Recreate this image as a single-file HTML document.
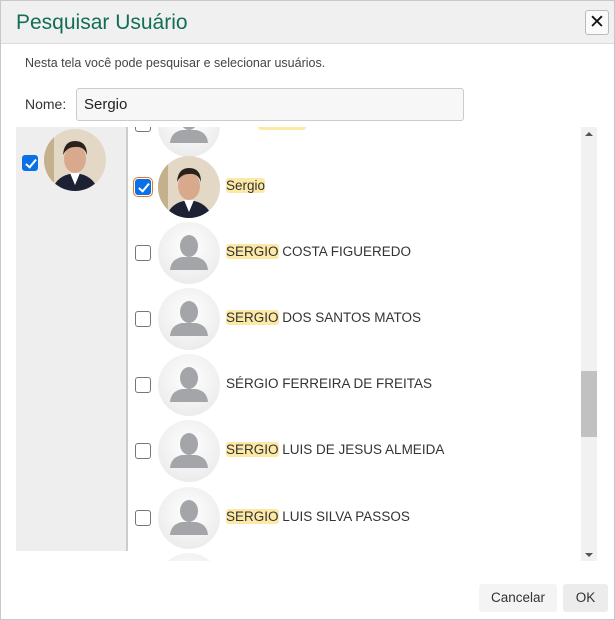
<!DOCTYPE html>
<html><head><meta charset="utf-8"><style>
*{box-sizing:border-box;margin:0;padding:0}
body{width:615px;height:620px;background:#fff;font-family:"Liberation Sans","DejaVu Sans",sans-serif;position:relative;overflow:hidden}
.frame{position:absolute;left:0;top:0;width:615px;height:620px;border:1px solid #c8c8c8}
.hdr{position:absolute;left:1px;top:1px;width:613px;height:43px;background:#f0f0f0;border-bottom:1px solid #ddd}
.title{position:absolute;left:15px;top:10px;font-size:21px;color:#136e57}
.close{position:absolute;left:584px;top:9px;width:24px;height:25px;border:1px solid #bbb;border-radius:3px;background:#fafafa;font-size:19px;font-weight:bold;text-align:center;line-height:23px;color:#111}
.desc{position:absolute;left:25px;top:56px;font-size:12.5px;color:#444}
.lbl{position:absolute;left:25px;top:96px;font-size:14px;color:#333}
.inp{position:absolute;left:65px;top:88px;width:399px;height:33px;border:1px solid #ccc;border-radius:3px;background:#f7f7f7;font-size:15px;padding:7px 7px;color:#222}
.left{position:absolute;left:16px;top:127px;width:112px;height:424px;background:#eee;border-right:2px solid #ccc}
.cb{position:absolute;width:16px;height:16px;border:1px solid #767676;border-radius:3px;background:#fff}
.cb.on{background:#0a70e8;border-color:#0a70e8}
.cb.on::after{content:"";position:absolute;left:5px;top:1px;width:4px;height:9px;border:solid #fff;border-width:0 2.5px 2.5px 0;transform:rotate(40deg)}
.av{position:absolute;width:62px;height:62px;border-radius:50%;background:radial-gradient(circle at 50% 40%,#fff,#ececec 75%,#dedede);overflow:hidden}
.photo{position:absolute;border-radius:50%;overflow:hidden}
.name{position:absolute;left:98px;font-size:13.5px;color:#333}
.hl{background:#fde9a6;border-radius:3px}
.list{position:absolute;left:128px;top:127px;width:453px;height:434px;overflow:hidden}
.sb{position:absolute;left:581px;top:127px;width:16px;height:434px;background:#f1f1f1}
.thumb{position:absolute;left:581px;top:371px;width:16px;height:66px;background:#c1c1c1}
.btn{position:absolute;top:584px;height:28px;border-radius:3px;font-size:13.5px;color:#333;text-align:center;line-height:28px}
</style></head><body>
<div class="frame"></div>
<div class="hdr"><div class="title">Pesquisar Usuário</div><div class="close">✕</div></div>
<div class="desc">Nesta tela você pode pesquisar e selecionar usuários.</div>
<div class="lbl">Nome:</div>
<div class="inp" style="left:76px;width:388px">Sergio</div>
<div class="left"></div>
<div class="cb on" style="left:22px;top:155px"></div>
<svg class="photo" style="left:44px;top:129px;width:62px;height:62px" viewBox="0 0 62 62"><rect width="62" height="62" fill="#e3d8c6"/><rect x="0" y="0" width="10" height="62" fill="#c4b08c"/><path d="M8 62 Q12 46 31 44 Q50 46 54 62Z" fill="#1c2233"/><path d="M26 44 L31 56 L36 44Z" fill="#fff"/><ellipse cx="31" cy="30" rx="11" ry="14" fill="#d8a98c"/><path d="M19 26 Q20 12 31 12 Q43 12 43 26 Q40 17 31 18 Q23 18 19 26Z" fill="#2a211c"/></svg>
<div class="list">
<div class="cb" style="left:7px;top:-11px"></div>
<div class="av" style="left:30px;top:-32px"><svg width="62" height="62" viewBox="0 0 62 62"><ellipse cx="31" cy="24" rx="9" ry="11" fill="#a3a5a8"/><path d="M12 48 Q13 37 24 35 L38 35 Q49 37 50 48Z" fill="#a3a5a8"/></svg></div>
<span class="hl" style="position:absolute;left:130px;top:-5px;width:48px;height:8px"></span>
<div class="cb on" style="left:7px;top:52px;outline:1px solid #e8742a;outline-offset:1px"></div>
<svg class="photo" style="left:30px;top:29px;width:62px;height:62px" viewBox="0 0 62 62"><rect width="62" height="62" fill="#e3d8c6"/><rect x="0" y="0" width="10" height="62" fill="#c4b08c"/><path d="M8 62 Q12 46 31 44 Q50 46 54 62Z" fill="#1c2233"/><path d="M26 44 L31 56 L36 44Z" fill="#fff"/><ellipse cx="31" cy="30" rx="11" ry="14" fill="#d8a98c"/><path d="M19 26 Q20 12 31 12 Q43 12 43 26 Q40 17 31 18 Q23 18 19 26Z" fill="#2a211c"/></svg>
<div class="name" style="top:51px"><span class="hl">Sergio</span></div>

<div class="cb" style="left:7px;top:118px"></div><div class="av" style="left:30px;top:95px"><svg width="62" height="62" viewBox="0 0 62 62"><ellipse cx="31" cy="24" rx="9" ry="11" fill="#a3a5a8"/><path d="M12 48 Q13 37 24 35 L38 35 Q49 37 50 48Z" fill="#a3a5a8"/></svg></div><div class="name" style="top:117px"><span class="hl">SERGIO</span> COSTA FIGUEREDO</div>
<div class="cb" style="left:7px;top:184px"></div><div class="av" style="left:30px;top:161px"><svg width="62" height="62" viewBox="0 0 62 62"><ellipse cx="31" cy="24" rx="9" ry="11" fill="#a3a5a8"/><path d="M12 48 Q13 37 24 35 L38 35 Q49 37 50 48Z" fill="#a3a5a8"/></svg></div><div class="name" style="top:183px"><span class="hl">SERGIO</span> DOS SANTOS MATOS</div>
<div class="cb" style="left:7px;top:250px"></div><div class="av" style="left:30px;top:227px"><svg width="62" height="62" viewBox="0 0 62 62"><ellipse cx="31" cy="24" rx="9" ry="11" fill="#a3a5a8"/><path d="M12 48 Q13 37 24 35 L38 35 Q49 37 50 48Z" fill="#a3a5a8"/></svg></div><div class="name" style="top:249px">SÉRGIO FERREIRA DE FREITAS</div>
<div class="cb" style="left:7px;top:316px"></div><div class="av" style="left:30px;top:293px"><svg width="62" height="62" viewBox="0 0 62 62"><ellipse cx="31" cy="24" rx="9" ry="11" fill="#a3a5a8"/><path d="M12 48 Q13 37 24 35 L38 35 Q49 37 50 48Z" fill="#a3a5a8"/></svg></div><div class="name" style="top:315px"><span class="hl">SERGIO</span> LUIS DE JESUS ALMEIDA</div>
<div class="cb" style="left:7px;top:383px"></div><div class="av" style="left:30px;top:360px"><svg width="62" height="62" viewBox="0 0 62 62"><ellipse cx="31" cy="24" rx="9" ry="11" fill="#a3a5a8"/><path d="M12 48 Q13 37 24 35 L38 35 Q49 37 50 48Z" fill="#a3a5a8"/></svg></div><div class="name" style="top:382px"><span class="hl">SERGIO</span> LUIS SILVA PASSOS</div>
<div class="av" style="left:30px;top:426px"></div>
</div>
<div class="sb"></div><div class="thumb"></div>
<div style="position:absolute;left:585px;top:132px;border:4px solid transparent;border-bottom:4px solid #555;border-top:0"></div>
<div style="position:absolute;left:585px;top:553px;border:4px solid transparent;border-top:4px solid #555;border-bottom:0"></div>
<div class="btn" style="left:479px;width:78px;background:#f4f4f4">Cancelar</div>
<div class="btn" style="left:563px;width:45px;background:#ececec">OK</div>
</body></html>
